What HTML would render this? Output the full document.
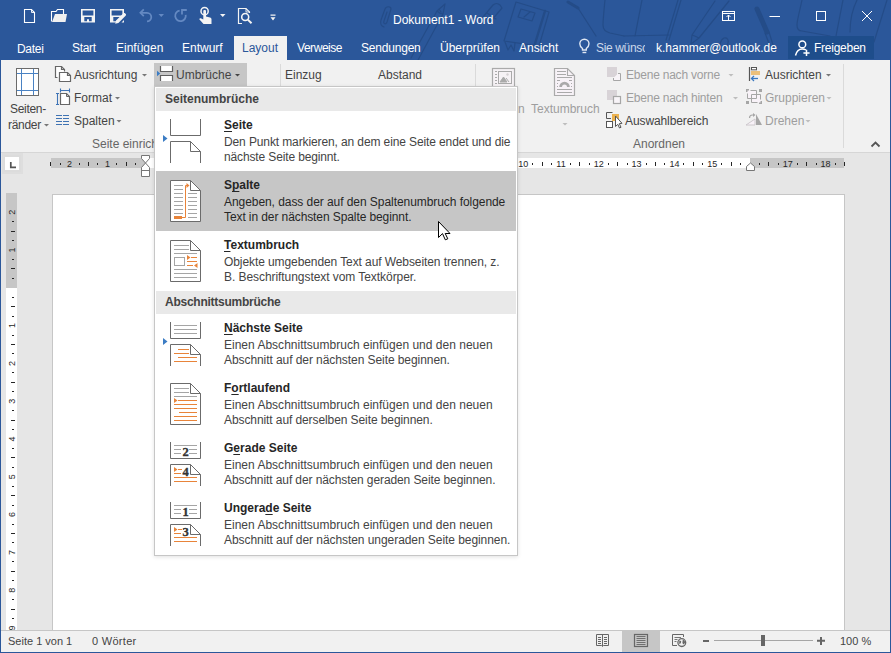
<!DOCTYPE html>
<html><head><meta charset="utf-8">
<style>
*{margin:0;padding:0;box-sizing:border-box}
html,body{width:891px;height:653px;overflow:hidden;background:#e6e6e6;font-family:"Liberation Sans",sans-serif;font-size:12px;color:#444}
.a{position:absolute}
.t{position:absolute;white-space:nowrap;font-size:12px;line-height:14px}
.w{color:#fff}
.dis{color:#9e9e9e}
.d{letter-spacing:-0.07px}
.ttl{font-weight:bold;color:#262626}
u{text-decoration:underline;text-underline-offset:2px}
svg{position:absolute;left:0;top:0;overflow:visible}
</style></head><body>
<!-- title + tab bar -->
<div class="a" style="left:0;top:0;width:891px;height:60px;background:#2b579a"></div>
<svg width="891" height="60" viewBox="0 0 891 60">
<g fill="none" stroke="#244c88" stroke-width="1.2" stroke-linecap="round" stroke-linejoin="round">
<path d="M384,27 C381,26 380,23 381,20 L385,9 C386,6 391,6 391,9 L387,22 C386,25 383,24 384,21 L387,12"/>
<path d="M445,4 L437,11 L411,58 M445,4 L443,14 L418,60 M437,11 C439,13 441,14 443,14 M439,9 L441,12"/>
<path d="M483,17 L493,5 C495,3 498,3 500,5 L502,8 L491,21 Z M487,13 L496,19"/>
<path d="M516,2 L549,12 L539,46 L504,41 Z"/>
<path d="M521,9 L535,13 L532,21 L518,17 Z M524,17 L530,12"/>
<path d="M505,42 L508,50 L511,45 L514,51 L515,43"/>
<path d="M578,8 L596,36"/>
<path d="M605,0 C604,10 603,20 603,25 C603,30 606,32 610,33 L624,36"/>
<path d="M642,0 L635,36"/>
<path d="M681,0 L669,40 M678,0 L666,40"/>
<path d="M715,1 L692,35 L691,44 L699,38 L729,1 M692,35 C695,36 697,37 699,38"/>
<path d="M722,50 C719,46 720,40 724,38 C727,37 729,40 728,43 L725,52"/>
<path d="M765,33 L770,46 M769,32 L773,45"/>
<path d="M624,36 L669,35"/>
<path d="M802,0 C800,10 797,20 797,25 C797,29 799,31 802,31 L830,36"/>
<path d="M843,0 L836,36"/>
<path d="M857,0 C852,10 850,20 850,32"/>
<path d="M887,0 L874,42"/>
</g>
<g fill="none" stroke="#244c88" stroke-linecap="round">
<path d="M545,11 L534,47" stroke-width="2.4"/>
<path d="M568,2 L578,8" stroke-width="3"/>
<path d="M757,9 L767,32" stroke-width="5"/>
</g>
</svg>
<div class="t w" style="left:393px;top:13px">Dokument1 - Word</div>

<!-- QAT icons -->
<svg width="891" height="60" viewBox="0 0 891 60">
<g fill="none" stroke="#fff" stroke-width="1.1">
<!-- new -->
<path d="M24.5,9.5 H31.5 L34.5,12.5 V22.5 H24.5 Z"/>
<path d="M31.5,9.5 V12.5 H34.5" stroke-width="0.9"/>
<!-- open -->
<path d="M51.5,21.5 V11.5 H56 L57.5,9.5 H63.5 V14"/>
</g>
<path d="M52,22 L55,14 H67 L65.5,22 Z" fill="#f0f0f0"/>
<!-- save -->
<path d="M81,9 H95 V22.5 H81 Z M82.6,10.4 V15.4 H93.4 V10.4 Z M84.3,17 V21.2 H87 V19.2 H89 V21.2 H91.7 V17 Z" fill="#f4f4f4" fill-rule="evenodd"/>
<!-- save edit -->
<path d="M110,9 H124 V14 L115.5,22.5 H110 Z M111.6,10.4 V15.4 H122.4 V10.4 Z M113.3,17 V21.2 H116.5 L120.5,17 Z" fill="#f4f4f4" fill-rule="evenodd"/>
<path d="M115.2,23.8 L116,20.6 L123.2,13.4 C123.8,12.8 124.6,12.8 125.2,13.4 L125.6,13.8 C126.2,14.4 126.2,15.2 125.6,15.8 L118.4,23 Z" fill="#f4f4f4"/>
<path d="M121.5,22.5 L124,20 V22.5 Z" fill="#f4f4f4"/>
<!-- undo -->
<g fill="none" stroke="#6489c2" stroke-width="1.8">
<path d="M140.5,12.8 H147 A4.3,4.3 0 0 1 147,21.4"/>
<path d="M143.8,9.4 L140.4,12.8 L143.8,16.2"/>
<path d="M179.6,10.6 A5.3,5.3 0 1 0 185.7,14.9"/>
<path d="M182,14.6 V10 H186.8"/>
</g>
<path d="M158.5,14 H164 L161.25,17 Z" fill="#6489c2"/>
<!-- touch -->
<g fill="none" stroke="#f4f4f4" stroke-width="1.5">
<circle cx="204.6" cy="11.2" r="3.6"/>
</g>
<path d="M203.3,11 C203.3,9.8 206,9.8 206,11 V16.5 L210,17.5 C211,17.8 211.5,18.5 211.5,19.5 V24 H203.5 L199.5,19.5 C199,19 199.8,17.8 200.8,18.3 L203.3,19.5 Z" fill="#f4f4f4"/>
<path d="M220,14 H225.5 L222.75,17 Z" fill="#f4f4f4"/>
<!-- print preview -->
<g fill="none" stroke="#f4f4f4" stroke-width="1.2">
<path d="M242,23.5 H238.5 V8.5 H246 L249.5,12 V13"/>
<path d="M246,8.5 V12 H249.5" stroke-width="0.9"/>
<circle cx="245.2" cy="17" r="3.5" stroke-width="1.6"/>
<path d="M247.8,19.6 L251.5,23.2" stroke-width="2"/>
</g>
<path d="M270.5,14.5 H275.5 V15.7 H270.5 Z M270.5,17.2 H275.5 L273,20.5 Z" fill="#f4f4f4"/>
<!-- window controls -->
<g fill="none" stroke="#fff" stroke-width="1">
<rect x="722.5" y="11.5" width="12" height="9"/>
<path d="M722.5,13.5 H734.5 M728.5,20 V15 M726.5,17 L728.5,15 L730.5,17"/>
<path d="M769.5,16.5 H780"/>
<rect x="816.5" y="11.5" width="9" height="9"/>
<path d="M862,11 L872,21 M872,11 L862,21"/>
</g>
<!-- lightbulb -->
<g fill="none" stroke="#dfe7f3" stroke-width="1.4">
<path d="M582.5,50 V48.5 C580.5,47 579.8,45.5 579.8,43.8 C579.8,41.2 581.9,39.2 584.4,39.2 C586.9,39.2 589,41.2 589,43.8 C589,45.5 588.3,47 586.3,48.5 V50 Z"/>
<path d="M582.5,52.5 H586.3"/>
</g>
</svg>

<!-- tabs -->
<div class="t w" style="left:17px;top:42px;letter-spacing:-0.3px">Datei</div>
<div class="t w" style="left:72px;top:41px;letter-spacing:-0.3px">Start</div>
<div class="t w" style="left:116px;top:41px">Einfügen</div>
<div class="t w" style="left:182px;top:41px">Entwurf</div>
<div class="a" style="left:234px;top:36px;width:53px;height:24px;background:#f1f1f1"></div>
<div class="t" style="left:242px;top:41px;color:#2b579a">Layout</div>
<div class="t w" style="left:297px;top:41px;letter-spacing:-0.45px">Verweise</div>
<div class="t w" style="left:361px;top:41px;letter-spacing:-0.2px">Sendungen</div>
<div class="t w" style="left:440px;top:41px">Überprüfen</div>
<div class="t w" style="left:519px;top:41px">Ansicht</div>
<div class="a" style="left:596px;top:36px;width:49px;height:20px;overflow:hidden"><div class="t" style="left:0;top:5px;color:#cdd9ea;letter-spacing:-0.35px">Sie wünschen</div></div>
<div class="t w" style="left:656px;top:41px">k.hammer@outlook.de</div>
<div class="a" style="left:788px;top:36px;width:86px;height:23px;background:#1e4d8b"></div>
<div class="t w" style="left:814px;top:41px;letter-spacing:-0.25px">Freigeben</div>
<!-- share icon drawn above -->
<svg width="891" height="60" viewBox="0 0 891 60">
<g fill="none" stroke="#fff" stroke-width="1.5">
<circle cx="802.3" cy="44.4" r="3.4"/>
<path d="M795.5,55.5 C796.5,51.5 799,49 802.3,49 C803.8,49 805,49.3 806,50"/>
<path d="M806.5,49.8 V56 M803.4,52.9 H809.6"/>
</g>
</svg>

<!-- ribbon -->
<div class="a" style="left:1px;top:60px;width:889px;height:92px;background:#f1f1f1"></div>
<div class="a" style="left:1px;top:152px;width:889px;height:1px;background:#d6d6d6"></div>

<div class="t" style="left:10px;top:102px;letter-spacing:-0.3px">Seiten-</div>
<div class="t" style="left:8px;top:118px;letter-spacing:-0.3px">ränder</div>
<div class="t" style="left:74px;top:68px">Ausrichtung</div>
<div class="t" style="left:74px;top:91px">Format</div>
<div class="t" style="left:74px;top:114px">Spalten</div>
<div class="t" style="left:92px;top:137px;color:#666">Seite einrichten</div>
<div class="a" style="left:154px;top:63px;width:93px;height:23px;background:#c6c6c6"></div>
<div class="t" style="left:176px;top:68px">Umbrüche</div>
<div class="a" style="left:280px;top:64px;width:1px;height:84px;background:#dadada"></div>
<div class="t" style="left:285px;top:68px">Einzug</div>
<div class="t" style="left:378px;top:68px">Abstand</div>
<div class="a" style="left:475px;top:64px;width:1px;height:84px;background:#dadada"></div>
<div class="t dis" style="left:518px;top:102px">n</div>
<div class="t dis" style="left:531px;top:102px">Textumbruch</div>
<div class="t dis" style="left:626px;top:68px;letter-spacing:-0.22px">Ebene nach vorne</div>
<div class="t dis" style="left:626px;top:91px;letter-spacing:-0.22px">Ebene nach hinten</div>
<div class="t" style="left:625px;top:114px;letter-spacing:-0.1px">Auswahlbereich</div>
<div class="t" style="left:633px;top:137px;color:#666">Anordnen</div>
<div class="t" style="left:765px;top:68px">Ausrichten</div>
<div class="t dis" style="left:765px;top:91px">Gruppieren</div>
<div class="t dis" style="left:765px;top:114px">Drehen</div>
<div class="a" style="left:843px;top:64px;width:1px;height:84px;background:#dadada"></div>

<svg width="891" height="160" viewBox="0 0 891 160">
<!-- dropdown arrows -->
<g fill="#777">
<path d="M44,124 H49 L46.5,126.5 Z"/>
<path d="M142,74 H147 L144.5,76.5 Z"/>
<path d="M115,97 H120 L117.5,99.5 Z"/>
<path d="M116.5,120 H121.5 L119,122.5 Z"/>

<path d="M826,74 H831 L828.5,76.5 Z"/>
</g>
<g fill="#bdbdbd">
<path d="M562.5,123 H567.5 L565,125.5 Z"/>
<path d="M728.5,74 H733.5 L731,76.5 Z"/>
<path d="M733,97 H738 L735.5,99.5 Z"/>
<path d="M826.5,97 H831.5 L829,99.5 Z"/>
<path d="M805.5,120 H810.5 L808,122.5 Z"/>
</g>
<path d="M235,74 H240 L237.5,76.5 Z" fill="#444"/>
<!-- Seitenraender -->
<rect x="16.5" y="68.5" width="22" height="27" fill="#fff" stroke="#6b6b6b"/>
<path d="M21.5,69 V95 M33.5,69 V95 M17,73.5 H38 M17,90.5 H38" stroke="#4a82c3" fill="none"/>
<!-- Ausrichtung -->
<g fill="#fff" stroke="#666" stroke-width="1.2">
<path d="M57.5,77.5 H55.5 V66.5 H61.5 L64.5,69.5 V71.5"/>
<path d="M61.5,66.5 V69.5 H64.5" fill="none"/>
<path d="M59.5,72.5 H67.5 L70.5,75.5 V81.5 H59.5 Z"/>
<path d="M67.5,72.5 V75.5 H70.5" fill="none"/>
</g>
<!-- Format -->
<g fill="none" stroke="#3f74b6" stroke-width="1.1">
<path d="M60.5,90.5 H69.5 M60.5,88.5 V92.5 M69.5,88.5 V92.5"/>
<path d="M57.5,93.5 V104.5 M56,93.5 H59 M56,104.5 H59"/>
</g>
<path d="M60.5,93.5 H66.5 L69.5,96.5 V104.5 H60.5 Z" fill="#fff" stroke="#666" stroke-width="1.2"/>
<path d="M66.5,93.5 V96.5 H69.5" fill="none" stroke="#666"/>
<!-- Spalten -->
<path d="M56,115.5 H62 M63,115.5 H69 M56,118.5 H62 M63,118.5 H69 M56,121.5 H62 M63,121.5 H69 M56,124.5 H62 M63,124.5 H69" stroke="#3f73b3" stroke-width="1.1" fill="none"/>
<!-- Umbrueche -->
<g fill="#fff" stroke="#5f5f5f" stroke-width="1.2">
<path d="M160.5,66 V71.5 H172.5 V66"/>
<path d="M160.5,81 V75.5 H172.5 V81"/>
</g>
<path d="M157,70.8 L160.3,73.5 L157,76.2 Z" fill="#3b7cc4"/>
<!-- Textumbruch disabled -->
<path d="M554.5,68.5 H567.5 L574.5,75.5 V95.5 H554.5 Z" fill="#f7f2f7" stroke="#aaa" stroke-width="1.2"/>
<path d="M567.5,68.5 V75.5 H574.5" fill="none" stroke="#aaa" stroke-width="1.1"/>
<path d="M557,71.5 H566 M557,74.5 H566 M557,77.5 H572 M557,80.5 H560 M569,80.5 H572 M557,89.5 H572 M557,92.5 H572" stroke="#aaa" fill="none"/>
<path d="M557,83h1v1h-1z M571,83h1v1h-1z M557,86h1v1h-1z M571,86h1v1h-1z" fill="#aaa"/>
<path d="M559.2,87 A5.3,5.3 0 0 1 569.8,87 H567 A2.5,2.5 0 0 0 562,87 Z" fill="#aaa"/>
<!-- Position icon partial (disabled) -->
<rect x="492.5" y="68.5" width="22" height="20" fill="#f6f2f5" stroke="#aaa" stroke-width="1.2"/>
<rect x="498.5" y="71.5" width="13" height="12" fill="#f6f2f5" stroke="#aaa"/>
<path d="M495,71.5 H497 M495,74.5 H497 M495,77.5 H497 M495,80.5 H497 M495,83.5 H497" stroke="#aaa"/>
<path d="M500,82 L503.5,77 L507,82 Z M506,78 L509,82" fill="#aaa" stroke="#aaa"/>
<circle cx="507.5" cy="74.5" r="1.2" fill="#d5d0d3"/>
<!-- Ebene nach vorne -->
<rect x="607" y="67" width="10" height="10" fill="#d8d3d7"/>
<path d="M618,73.5 H620.5 V80.5 H613.5 V78" fill="#f8f4f8" stroke="#a6a6a6"/>
<!-- Ebene nach hinten -->
<rect x="607" y="90" width="10" height="10" fill="#d8d3d7"/>
<rect x="613.5" y="96.5" width="7" height="7" fill="#f8f4f8" stroke="#a6a6a6" stroke-width="1.2"/>
<!-- Auswahlbereich -->
<path d="M612.5,112.5 H606.5 V118.5 H611" fill="none" stroke="#555"/>
<rect x="606.5" y="121.5" width="6" height="6" fill="#fff" stroke="#555"/>
<path d="M612,114 H619 V121 H612 Z" fill="#ecb24f"/>
<path d="M615.5,116 V126.5 L617.8,124.3 L619.5,128 L621,127.3 L619.3,123.6 L622,123.3 Z" fill="#fff" stroke="#555" stroke-width="1"/>
<!-- Ausrichten -->
<path d="M749.5,67 V81" stroke="#555" stroke-width="1.2"/>
<rect x="751.5" y="67.5" width="5" height="2.3" fill="#fff" stroke="#555"/>
<rect x="751" y="71" width="9" height="4" fill="#ecc07a"/>
<g fill="none" stroke="#3a78c0" stroke-width="1.3">
<path d="M751.5,78.5 H758"/>
<path d="M754,76 L751.5,78.5 L754,81"/>
</g>
<!-- Gruppieren -->
<g fill="#a6a6a6">
<rect x="746" y="89" width="3" height="3"/><rect x="759" y="89" width="3" height="3"/>
<rect x="746" y="101" width="3" height="3"/><rect x="759" y="101" width="3" height="3"/>
</g>
<path d="M747.5,90.5 H756.5 V98.5 H747.5 Z M751.5,94.5 H760.5 V102.5 H751.5 Z" fill="#f8f2f8"/>
<g fill="none" stroke="#a6a6a6" stroke-width="1">
<path d="M750.5,90.5 H756.5 V98.5 H747.5 V93.5"/>
<path d="M760.5,99.5 V94.5 H751.5 V102.5 H757.5"/>
</g>
<!-- Drehen -->
<path d="M746,125 L755,119 V125 Z" fill="#f8f2f8" stroke="#c9c4c8" stroke-width="0.9"/>
<path d="M756,114 V125 H762 Z" fill="#a6a6a6"/>
<path d="M749.5,118 C749.5,116 750.5,115 752.5,115 H753.5" fill="none" stroke="#a6a6a6" stroke-width="1.2"/>
<path d="M753,113 L755.5,115 L753,117 Z" fill="#a6a6a6"/>
<!-- collapse caret -->
<path d="M871.5,146.5 L875.5,142.5 L879.5,146.5" fill="none" stroke="#555" stroke-width="1.8"/>
</svg>

<!-- ruler row -->
<div class="a" style="left:2px;top:153px;width:21px;height:21px;background:#dedede"></div>
<div class="a" style="left:4px;top:155px;width:17px;height:17px;background:#dcdcdc"></div><div class="a" style="left:5px;top:157px;width:14px;height:13px;background:#fff"></div>
<svg width="891" height="200" viewBox="0 0 891 200">
<path d="M10.8,162 V167.3 H16" fill="none" stroke="#555" stroke-width="1.7"/>
<rect x="51" y="158" width="95" height="10" fill="#c6c6c6"/>
<rect x="146" y="158" width="604" height="10" fill="#fff"/>
<rect x="750" y="158" width="94" height="10" fill="#c6c6c6"/>
<g fill="#262626" font-family="Liberation Sans" font-size="9" text-anchor="middle">
<rect x="50" y="162" width="1" height="4"/>
<rect x="60" y="163" width="1" height="2"/>
<text x="69.6" y="167">2</text>
<rect x="79" y="163" width="1" height="2"/>
<rect x="88" y="162" width="1" height="4"/>
<rect x="97" y="163" width="1" height="2"/>
<text x="107.4" y="167">1</text>
<rect x="116" y="163" width="1" height="2"/>
<rect x="126" y="162" width="1" height="4"/>
<rect x="135" y="163" width="1" height="2"/>
<rect x="154" y="163" width="1" height="2"/>
<rect x="164" y="162" width="1" height="4"/>
<rect x="173" y="163" width="1" height="2"/>
<text x="183.0" y="167">1</text>
<rect x="192" y="163" width="1" height="2"/>
<rect x="201" y="162" width="1" height="4"/>
<rect x="211" y="163" width="1" height="2"/>
<text x="220.8" y="167">2</text>
<rect x="230" y="163" width="1" height="2"/>
<rect x="239" y="162" width="1" height="4"/>
<rect x="249" y="163" width="1" height="2"/>
<text x="258.6" y="167">3</text>
<rect x="268" y="163" width="1" height="2"/>
<rect x="277" y="162" width="1" height="4"/>
<rect x="286" y="163" width="1" height="2"/>
<text x="296.4" y="167">4</text>
<rect x="305" y="163" width="1" height="2"/>
<rect x="315" y="162" width="1" height="4"/>
<rect x="324" y="163" width="1" height="2"/>
<text x="334.2" y="167">5</text>
<rect x="343" y="163" width="1" height="2"/>
<rect x="353" y="162" width="1" height="4"/>
<rect x="362" y="163" width="1" height="2"/>
<text x="372.0" y="167">6</text>
<rect x="381" y="163" width="1" height="2"/>
<rect x="390" y="162" width="1" height="4"/>
<rect x="400" y="163" width="1" height="2"/>
<text x="409.8" y="167">7</text>
<rect x="419" y="163" width="1" height="2"/>
<rect x="428" y="162" width="1" height="4"/>
<rect x="438" y="163" width="1" height="2"/>
<text x="447.6" y="167">8</text>
<rect x="457" y="163" width="1" height="2"/>
<rect x="466" y="162" width="1" height="4"/>
<rect x="475" y="163" width="1" height="2"/>
<text x="485.4" y="167">9</text>
<rect x="494" y="163" width="1" height="2"/>
<rect x="504" y="162" width="1" height="4"/>
<rect x="513" y="163" width="1" height="2"/>
<text x="523.2" y="167">10</text>
<rect x="532" y="163" width="1" height="2"/>
<rect x="542" y="162" width="1" height="4"/>
<rect x="551" y="163" width="1" height="2"/>
<text x="561.0" y="167">11</text>
<rect x="570" y="163" width="1" height="2"/>
<rect x="579" y="162" width="1" height="4"/>
<rect x="589" y="163" width="1" height="2"/>
<text x="598.8" y="167">12</text>
<rect x="608" y="163" width="1" height="2"/>
<rect x="617" y="162" width="1" height="4"/>
<rect x="627" y="163" width="1" height="2"/>
<text x="636.6" y="167">13</text>
<rect x="646" y="163" width="1" height="2"/>
<rect x="655" y="162" width="1" height="4"/>
<rect x="664" y="163" width="1" height="2"/>
<text x="674.4" y="167">14</text>
<rect x="683" y="163" width="1" height="2"/>
<rect x="693" y="162" width="1" height="4"/>
<rect x="702" y="163" width="1" height="2"/>
<text x="712.2" y="167">15</text>
<rect x="721" y="163" width="1" height="2"/>
<rect x="731" y="162" width="1" height="4"/>
<rect x="740" y="163" width="1" height="2"/>
<rect x="759" y="163" width="1" height="2"/>
<rect x="768" y="162" width="1" height="4"/>
<rect x="778" y="163" width="1" height="2"/>
<text x="787.8" y="167">17</text>
<rect x="797" y="163" width="1" height="2"/>
<rect x="806" y="162" width="1" height="4"/>
<rect x="816" y="163" width="1" height="2"/>
<text x="825.6" y="167">18</text>
<rect x="835" y="163" width="1" height="2"/>
<rect x="844" y="162" width="1" height="4"/>
</g>
<g fill="#fff" stroke="#767676" stroke-width="1">
<path d="M141.5,155.5 H149.5 V158.5 L145.5,163 L149.5,167.5 V176.5 H141.5 V167.5 L145.5,163 L141.5,158.5 Z"/>
<path d="M141.5,170.5 H149.5"/>
<path d="M746.5,170.5 V166.5 L750.5,163 L754.5,166.5 V170.5 Z"/>
</g>
</svg>

<!-- vertical ruler -->
<div class="a" style="left:6px;top:193px;width:11px;height:95px;background:#c6c6c6"></div>
<div class="a" style="left:6px;top:288px;width:11px;height:342px;background:#fff"></div>
<svg width="891" height="653" viewBox="0 0 891 653">
<g fill="#262626" font-family="Liberation Sans" font-size="9" text-anchor="middle">
<text transform="translate(15,212.2) rotate(-90)" y="0">2</text>
<rect x="12" y="221" width="2" height="1"/>
<rect x="11" y="231" width="4" height="1"/>
<rect x="12" y="240" width="2" height="1"/>
<text transform="translate(15,250.0) rotate(-90)" y="0">1</text>
<rect x="12" y="259" width="2" height="1"/>
<rect x="11" y="268" width="4" height="1"/>
<rect x="12" y="278" width="2" height="1"/>
<rect x="12" y="297" width="2" height="1"/>
<rect x="11" y="306" width="4" height="1"/>
<rect x="12" y="316" width="2" height="1"/>
<text transform="translate(15,325.6) rotate(-90)" y="0">1</text>
<rect x="12" y="335" width="2" height="1"/>
<rect x="11" y="344" width="4" height="1"/>
<rect x="12" y="353" width="2" height="1"/>
<text transform="translate(15,363.4) rotate(-90)" y="0">2</text>
<rect x="12" y="372" width="2" height="1"/>
<rect x="11" y="382" width="4" height="1"/>
<rect x="12" y="391" width="2" height="1"/>
<text transform="translate(15,401.2) rotate(-90)" y="0">3</text>
<rect x="12" y="410" width="2" height="1"/>
<rect x="11" y="420" width="4" height="1"/>
<rect x="12" y="429" width="2" height="1"/>
<text transform="translate(15,439.0) rotate(-90)" y="0">4</text>
<rect x="12" y="448" width="2" height="1"/>
<rect x="11" y="457" width="4" height="1"/>
<rect x="12" y="467" width="2" height="1"/>
<text transform="translate(15,476.8) rotate(-90)" y="0">5</text>
<rect x="12" y="486" width="2" height="1"/>
<rect x="11" y="495" width="4" height="1"/>
<rect x="12" y="505" width="2" height="1"/>
<text transform="translate(15,514.6) rotate(-90)" y="0">6</text>
<rect x="12" y="524" width="2" height="1"/>
<rect x="11" y="533" width="4" height="1"/>
<rect x="12" y="542" width="2" height="1"/>
<text transform="translate(15,552.4) rotate(-90)" y="0">7</text>
<rect x="12" y="561" width="2" height="1"/>
<rect x="11" y="571" width="4" height="1"/>
<rect x="12" y="580" width="2" height="1"/>
<text transform="translate(15,590.2) rotate(-90)" y="0">8</text>
<rect x="12" y="599" width="2" height="1"/>
<rect x="11" y="609" width="4" height="1"/>
<rect x="12" y="618" width="2" height="1"/>
<text transform="translate(15,628.0) rotate(-90)" y="0">9</text>
</g>
</svg>

<!-- page -->
<div class="a" style="left:52px;top:194px;width:793px;height:437px;background:#fff;border:1px solid #c6c6c6;border-bottom:none"></div>

<!-- status bar -->
<div class="a" style="left:1px;top:630px;width:889px;height:1px;background:#c6c6c6"></div>
<div class="a" style="left:1px;top:631px;width:889px;height:21px;background:#f1f1f1"></div>
<div class="t" style="left:8px;top:634px;font-size:11px">Seite 1 von 1</div>
<div class="t" style="left:92px;top:634px;font-size:11px;letter-spacing:0.3px">0 Wörter</div>
<div class="a" style="left:622px;top:631px;width:38px;height:21px;background:#c6c6c6"></div>
<div class="t" style="left:840px;top:634px;font-size:11px">100 %</div>
<svg width="891" height="653" viewBox="0 0 891 653">
<g fill="none" stroke="#666" stroke-width="1">
<!-- read mode -->
<path d="M596.5,634.5 H608.5 V645.5 H603.5 L602.5,646.5 L601.5,645.5 H596.5 Z"/>
<path d="M602.5,635 V646 M598,637.5 H601 M604,637.5 H607 M598,639.5 H601 M604,639.5 H607 M598,641.5 H601 M604,641.5 H607 M598,643.5 H601 M604,643.5 H607"/>
<!-- print layout -->
<rect x="634.5" y="634.5" width="13" height="12" stroke-width="1.2"/>
<path d="M636.5,636.5 H645.5 M636.5,638.5 H645.5 M636.5,640.5 H645.5 M636.5,642.5 H645.5 M636.5,644.5 H645.5" stroke-width="0.9"/>
<!-- web layout -->
<path d="M677,645.5 H672.5 V634.5 H683.5 V637"/>
<path d="M674.5,637.5 H681 M674.5,639.5 H677.5 M674.5,641.5 H676.5" stroke-width="0.9"/>
</g>
<circle cx="681.8" cy="642.6" r="3.9" fill="#f1f1f1" stroke="#666" stroke-width="1.3"/>
<path d="M679.3,640.2 L681.2,641.3 L680.8,643.2 L679.2,644 Z M682.8,639.6 L684.8,640.8 L685,643 L683.4,644.6 L682.4,643 Z" fill="#666"/>
<rect x="703" y="640" width="6" height="2" fill="#666"/>
<rect x="714" y="640" width="99" height="1" fill="#a6a6a6"/>
<rect x="761" y="635" width="4" height="11" fill="#666"/>
<path d="M817,640.8 H825 M821,637 V645" stroke="#666" stroke-width="2" fill="none"/>
</svg>

<!-- frame borders -->
<div class="a" style="left:0;top:0;width:1px;height:653px;background:#2b579a"></div>
<div class="a" style="left:890px;top:0;width:1px;height:653px;background:#2b579a"></div>
<div class="a" style="left:0;top:652px;width:891px;height:1px;background:#2b579a"></div>

<!-- dropdown menu -->
<div class="a" style="left:154px;top:86px;width:364px;height:470px;background:#fff;border:1px solid #c6c6c6;box-shadow:0 1px 4px rgba(0,0,0,0.12)"></div>
<div class="a" style="left:156px;top:88px;width:360px;height:23px;background:#e9e9e9"></div>
<div class="t ttl" style="left:165px;top:92px;color:#444">Seitenumbrüche</div>
<div class="a" style="left:156px;top:171px;width:360px;height:60px;background:#c6c6c6"></div>
<div class="a" style="left:156px;top:291px;width:360px;height:23px;background:#e9e9e9"></div>
<div class="t ttl" style="left:165px;top:295px;color:#444;letter-spacing:-0.25px">Abschnittsumbrüche</div>

<div class="t ttl" style="left:224px;top:118px"><u>S</u>eite</div>
<div class="t" style="left:224px;top:135px;letter-spacing:-0.113px">Den Punkt markieren, an dem eine Seite endet und die</div>
<div class="t" style="left:224px;top:150px;letter-spacing:-0.136px">nächste Seite beginnt.</div>

<div class="t ttl" style="left:224px;top:178px">S<u>p</u>alte</div>
<div class="t" style="left:224px;top:195px;color:#262626;letter-spacing:-0.061px">Angeben, dass der auf den Spaltenumbruch folgende</div>
<div class="t" style="left:224px;top:210px;color:#262626;letter-spacing:-0.094px">Text in der nächsten Spalte beginnt.</div>

<div class="t ttl" style="left:224px;top:238px"><u>T</u>extumbruch</div>
<div class="t" style="left:224px;top:255px;letter-spacing:-0.088px">Objekte umgebenden Text auf Webseiten trennen, z.</div>
<div class="t" style="left:224px;top:270px;letter-spacing:-0.061px">B. Beschriftungstext vom Textkörper.</div>

<div class="t ttl" style="left:224px;top:321px"><u>N</u>ächste Seite</div>
<div class="t" style="left:224px;top:338px;letter-spacing:0.009px">Einen Abschnittsumbruch einfügen und den neuen</div>
<div class="t" style="left:224px;top:353px;letter-spacing:-0.071px">Abschnitt auf der nächsten Seite beginnen.</div>

<div class="t ttl" style="left:224px;top:381px">F<u>o</u>rtlaufend</div>
<div class="t" style="left:224px;top:398px;letter-spacing:0.009px">Einen Abschnittsumbruch einfügen und den neuen</div>
<div class="t" style="left:224px;top:413px;letter-spacing:-0.090px">Abschnitt auf derselben Seite beginnen.</div>

<div class="t ttl" style="left:224px;top:441px">G<u>e</u>rade Seite</div>
<div class="t" style="left:224px;top:458px;letter-spacing:0.009px">Einen Abschnittsumbruch einfügen und den neuen</div>
<div class="t" style="left:224px;top:473px;letter-spacing:-0.096px">Abschnitt auf der nächsten geraden Seite beginnen.</div>

<div class="t ttl" style="left:224px;top:501px">Ungera<u>d</u>e Seite</div>
<div class="t" style="left:224px;top:518px;letter-spacing:0.009px">Einen Abschnittsumbruch einfügen und den neuen</div>
<div class="t" style="left:224px;top:533px;letter-spacing:-0.062px">Abschnitt auf der nächsten ungeraden Seite beginnen.</div>

<!-- menu icons -->
<svg width="891" height="653" viewBox="0 0 891 653">
<g fill="none" stroke="#6b6b6b" stroke-width="1">
<!-- Seite -->
<path d="M170.5,119 V135.5 H200.5 V119"/>
<path d="M170.5,163 V141.5 H190.5 L200.5,151.5 V163"/>
<path d="M190.5,141.5 V151.5 H200.5"/>
</g>
<path d="M163,135 L167.5,138.5 L163,142 Z" fill="#3b7cc4"/>

<!-- Spalte -->
<path d="M170.5,180.5 H190.5 L200.5,190.5 V221.5 H170.5 Z" fill="#fff" stroke="#6b6b6b"/>
<path d="M190.5,180.5 V190.5 H200.5" fill="none" stroke="#6b6b6b"/>
<path d="M174,185.5 H183 M174,189.5 H183 M174,193.5 H183 M174,197.5 H183 M174,201.5 H183 M174,205.5 H183 M174,209.5 H183 M174,213.5 H183 M188,193.5 H197 M188,197.5 H197 M188,201.5 H197 M188,205.5 H197 M188,209.5 H197 M188,213.5 H197 M188,217.5 H197" stroke="#a5a5a5" fill="none"/>
<rect x="174" y="216" width="8" height="3" fill="#e8843a"/>
<path d="M182,217.5 H185.5 V185.5 H187" fill="none" stroke="#e8843a"/>
<path d="M186.5,183 L189.5,185.5 L186.5,188 Z" fill="#e8843a"/>

<!-- Textumbruch -->
<path d="M170.5,240.5 H190.5 L200.5,250.5 V281.5 H170.5 Z" fill="#fff" stroke="#6b6b6b"/>
<path d="M190.5,240.5 V250.5 H200.5" fill="none" stroke="#6b6b6b"/>
<path d="M174,245.5 H189 M174,249.5 H189 M174,253.5 H197 M174,269.5 H197 M174,273.5 H197 M174,277.5 H197" stroke="#a5a5a5" fill="none"/>
<rect x="174.5" y="257.5" width="10" height="8" fill="none" stroke="#a5a5a5"/>
<path d="M191,257.5 H197 M187,261.5 H197 M187,265.5 H193" stroke="#e8843a" fill="none"/>
<path d="M187,255 L190.5,257.5 L187,260 Z M197.5,263 L194,265.5 L197.5,268 Z" fill="#e8843a"/>

<!-- Naechste Seite -->
<g fill="none" stroke="#6b6b6b" stroke-width="1">
<path d="M170.5,322 V338.5 H200.5 V322"/>
<path d="M170.5,366 V344.5 H190.5 L200.5,354.5 V366"/>
<path d="M190.5,344.5 V354.5 H200.5"/>
</g>
<path d="M174,325.5 H197 M174,329.5 H197 M174,333.5 H197" stroke="#a5a5a5" fill="none"/>
<path d="M178,349.5 H189 M174,353.5 H189 M178,357.5 H197 M174,361.5 H197" stroke="#e8843a" fill="none"/>
<path d="M163,338 L167.5,341.5 L163,345 Z" fill="#3b7cc4"/>

<!-- Fortlaufend -->
<path d="M170.5,383.5 H190.5 L200.5,393.5 V424.5 H170.5 Z" fill="#fff" stroke="#6b6b6b"/>
<path d="M190.5,383.5 V393.5 H200.5" fill="none" stroke="#6b6b6b"/>
<path d="M174,388.5 H189 M174,392.5 H189 M174,396.5 H197" stroke="#a5a5a5" fill="none"/>
<path d="M178,400.5 H197 M174,404.5 H197 M174,408.5 H197 M179,412.5 H197 M174,416.5 H197 M174,420.5 H197" stroke="#e8843a" fill="none"/>
<path d="M174,398 L177.5,400.5 L174,403 Z" fill="#e8843a"/>

<!-- Gerade Seite -->
<g fill="none" stroke="#6b6b6b" stroke-width="1">
<path d="M170.5,442 V458.5 H200.5 V442"/>
<path d="M170.5,486 V464.5 H190.5 L200.5,474.5 V486"/>
<path d="M190.5,464.5 V474.5 H200.5"/>
</g>
<path d="M174,445.5 H197 M174,449.5 H181 M189,449.5 H197 M174,453.5 H181 M189,453.5 H197" stroke="#a5a5a5" fill="none"/>
<path d="M178,469.5 H182 M174,473.5 H181 M174,477.5 H197 M174,481.5 H197" stroke="#e8843a" fill="none"/>
<path d="M174,467 L177.5,469.5 L174,472 Z" fill="#e8843a"/>
<g fill="#333" stroke="#333" stroke-width="0.35" font-family="Liberation Serif" font-weight="bold" font-size="12.5" text-anchor="middle">
<text x="185.5" y="456">2</text>
<text x="185.5" y="476">4</text>
</g>

<!-- Ungerade Seite -->
<g fill="none" stroke="#6b6b6b" stroke-width="1">
<path d="M170.5,502 V518.5 H200.5 V502"/>
<path d="M170.5,546 V524.5 H190.5 L200.5,534.5 V546"/>
<path d="M190.5,524.5 V534.5 H200.5"/>
</g>
<path d="M174,505.5 H197 M174,509.5 H181 M189,509.5 H197 M174,513.5 H181 M189,513.5 H197" stroke="#a5a5a5" fill="none"/>
<path d="M178,529.5 H182 M174,533.5 H181 M174,537.5 H197 M174,541.5 H197" stroke="#e8843a" fill="none"/>
<path d="M174,527 L177.5,529.5 L174,532 Z" fill="#e8843a"/>
<g fill="#333" stroke="#333" stroke-width="0.35" font-family="Liberation Serif" font-weight="bold" font-size="12.5" text-anchor="middle">
<text x="185.5" y="516">1</text>
<text x="185.5" y="536">3</text>
</g>

<!-- cursor -->
<path d="M438.5,221.5 V237.5 L442.5,233.6 L445.3,239.8 L447.8,238.8 L445.2,233.5 L450,233.5 Z" fill="#fff" stroke="#000" stroke-width="1" stroke-linejoin="round"/>
</svg>
</body></html>
